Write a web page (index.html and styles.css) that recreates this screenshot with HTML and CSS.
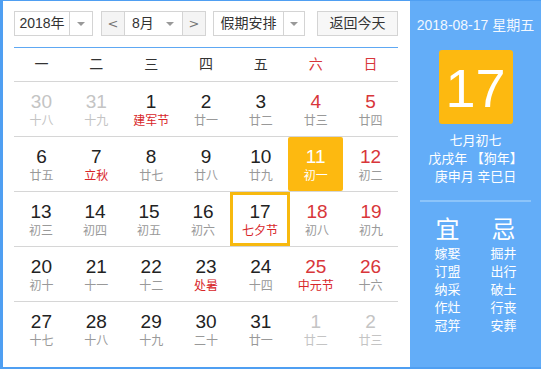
FILE: index.html
```html
<!DOCTYPE html>
<html>
<head>
    <meta charset="utf-8">
    <title>万年历</title>
    <link rel="stylesheet" href="styles.css">
</head>
<body>
<div class="calendar">
    <div class="main">
        <div class="toolbar">
            <div class="select year">
                <span class="sel-text">2018年</span>
                <span class="sel-arrow"><i class="tri"></i></span>
            </div>
            <div class="month-group">
                <span class="nav-btn">&lt;</span>
                <span class="month-text"><span>8月</span><i class="tri"></i></span>
                <span class="nav-btn">&gt;</span>
            </div>
            <div class="select holiday">
                <span class="sel-text">假期安排</span>
                <span class="sel-arrow"><i class="tri"></i></span>
            </div>
            <span class="today-btn">返回今天</span>
        </div>

        <div class="week">
            <span>一</span><span>二</span><span>三</span><span>四</span><span>五</span>
            <span class="weekend">六</span><span class="weekend">日</span>
        </div>

        <div class="row">
            <div class="cell other"><b>30</b><em>十八</em></div>
            <div class="cell other"><b>31</b><em>十九</em></div>
            <div class="cell"><b>1</b><em class="fest">建军节</em></div>
            <div class="cell"><b>2</b><em>廿一</em></div>
            <div class="cell"><b>3</b><em>廿二</em></div>
            <div class="cell weekend"><b>4</b><em>廿三</em></div>
            <div class="cell weekend"><b>5</b><em>廿四</em></div>
        </div>
        <div class="row">
            <div class="cell"><b>6</b><em>廿五</em></div>
            <div class="cell"><b>7</b><em class="fest">立秋</em></div>
            <div class="cell"><b>8</b><em>廿七</em></div>
            <div class="cell"><b>9</b><em>廿八</em></div>
            <div class="cell"><b>10</b><em>廿九</em></div>
            <div class="cell weekend hl"><b>11</b><em>初一</em></div>
            <div class="cell weekend"><b>12</b><em>初二</em></div>
        </div>
        <div class="row">
            <div class="cell"><b>13</b><em>初三</em></div>
            <div class="cell"><b>14</b><em>初四</em></div>
            <div class="cell"><b>15</b><em>初五</em></div>
            <div class="cell"><b>16</b><em>初六</em></div>
            <div class="cell cur"><b>17</b><em class="fest">七夕节</em></div>
            <div class="cell weekend"><b>18</b><em>初八</em></div>
            <div class="cell weekend"><b>19</b><em>初九</em></div>
        </div>
        <div class="row">
            <div class="cell"><b>20</b><em>初十</em></div>
            <div class="cell"><b>21</b><em>十一</em></div>
            <div class="cell"><b>22</b><em>十二</em></div>
            <div class="cell"><b>23</b><em class="fest">处暑</em></div>
            <div class="cell"><b>24</b><em>十四</em></div>
            <div class="cell weekend"><b>25</b><em class="fest">中元节</em></div>
            <div class="cell weekend"><b>26</b><em>十六</em></div>
        </div>
        <div class="row last">
            <div class="cell"><b>27</b><em>十七</em></div>
            <div class="cell"><b>28</b><em>十八</em></div>
            <div class="cell"><b>29</b><em>十九</em></div>
            <div class="cell"><b>30</b><em>二十</em></div>
            <div class="cell"><b>31</b><em>廿一</em></div>
            <div class="cell other"><b>1</b><em>廿二</em></div>
            <div class="cell other"><b>2</b><em>廿三</em></div>
        </div>
    </div>

    <div class="side">
        <div class="side-date">2018-08-17 星期五</div>
        <div class="big-day">17</div>
        <div class="lunar">
            <p>七月初七</p>
            <p>戊戌年 【狗年】</p>
            <p>庚申月 辛巳日</p>
        </div>
        <div class="split"></div>
        <div class="yiji">
            <div class="col">
                <h3>宜</h3>
                <p>嫁娶</p><p>订盟</p><p>纳采</p><p>作灶</p><p>冠笄</p>
            </div>
            <div class="col">
                <h3>忌</h3>
                <p>掘井</p><p>出行</p><p>破土</p><p>行丧</p><p>安葬</p>
            </div>
        </div>
    </div>
</div>
</body>
</html>
```

FILE: styles.css
```css
*{
    box-sizing: border-box;
}
body{
    margin: 0;
    font-family: "Liberation Sans", "Noto Sans CJK SC", sans-serif;
    color: #333;
}
.calendar{
    width: 541px;
    height: 369px;
    display: flex;
    border-left: 3px solid #4f9ff2;
    border-top: 1px solid #4f9ff2;
    border-bottom: 2px solid #4f9ff2;
    background-color: #fff;
}
.main{
    width: 407px;
    padding: 10px 12px 0 11px;
}
.side{
    flex: 1;
    background-color: #63adf8;
    color: #fff;
    text-align: center;
    padding-top: 16px;
}

/* 工具栏 */
.toolbar{
    display: flex;
    height: 25px;
    font-size: 14px;
    white-space: nowrap;
}
.select{
    display: flex;
    height: 25px;
    border: solid 1px #d4d4d4;
    background-color: #fff;
}
.sel-text{
    line-height: 23px;
    text-align: center;
}
.sel-arrow{
    display: flex;
    align-items: center;
    justify-content: center;
    border-left: solid 1px #d4d4d4;
}
.year{
    width: 79px;
}
.year .sel-text{
    width: 54px;
}
.year .sel-arrow{
    width: 23px;
}
.holiday{
    width: 92px;
    margin-left: 7px;
}
.holiday .sel-text{
    width: 69px;
}
.holiday .sel-arrow{
    width: 21px;
}
.tri{
    display: inline-block;
    width: 0;
    height: 0;
    border-left: 4px solid transparent;
    border-right: 4px solid transparent;
    border-top: 4px solid #999;
}
.month-group{
    display: flex;
    width: 105px;
    height: 25px;
    margin-left: 8px;
    border: solid 1px #d4d4d4;
}
.nav-btn{
    width: 22px;
    line-height: 23px;
    text-align: center;
    background-color: #f4f4f4;
    color: #777;
    font-family: "DejaVu Sans", sans-serif;
    font-size: 13px;
}
.month-text{
    flex: 1;
    display: flex;
    align-items: center;
    justify-content: space-between;
    padding: 0 8px 0 7px;
    line-height: 23px;
    border-left: solid 1px #d4d4d4;
    border-right: solid 1px #d4d4d4;
}
.today-btn{
    margin-left: auto;
    width: 81px;
    height: 25px;
    line-height: 23px;
    text-align: center;
    border: solid 1px #d4d4d4;
    background-color: #f7f7f7;
}

/* 日历表 */
.week{
    display: flex;
    margin-top: 11px;
    height: 35px;
    border-top: solid 1px #5ea8f3;
    border-bottom: solid 1px #d6d6d6;
}
.week span{
    flex: 1;
    line-height: 32px;
    text-align: center;
    font-size: 14px;
    color: #333;
}
.week .weekend{
    color: #d8363a;
}
.row{
    display: flex;
    height: 55px;
    border-bottom: solid 1px #d6d6d6;
}
.row.last{
    border-bottom: none;
}
.cell{
    flex: 1;
    height: 54px;
    padding-top: 10px;
    text-align: center;
}
.cell b{
    display: block;
    font-weight: normal;
    font-size: 19px;
    line-height: 20px;
    color: #222;
}
.cell em{
    display: block;
    font-style: normal;
    font-size: 12px;
    line-height: 18px;
    color: #999;
}
.cell.weekend b{
    color: #d8363a;
}
.cell em.fest{
    color: #d8262a;
}
.cell.other b,
.cell.other em{
    color: #c4c4c4;
}
.cell.hl{
    background-color: #fdb910;
    border-radius: 2px;
}
.cell.hl b,
.cell.hl em{
    color: #fff;
}
.cell.cur{
    border: solid 3px #f7b90f;
    padding-top: 7px;
}

/* 右侧 */
.side-date{
    font-size: 14px;
    line-height: 16px;
    color: #f2f8ff;
}
.big-day{
    width: 74px;
    height: 74px;
    margin: 17px auto 0;
    background-color: #fdb910;
    border-radius: 3px;
    font-size: 54px;
    line-height: 76px;
    color: #fff;
}
.lunar{
    margin-top: 8px;
    font-size: 13px;
}
.lunar p{
    margin: 0;
    line-height: 18px;
}
.split{
    height: 2px;
    margin: 14px 10px 0 10px;
    background-color: #8cc4fa;
}
.yiji{
    display: flex;
    justify-content: center;
    gap: 16px;
    margin-top: 13px;
}
.yiji .col{
    width: 40px;
}
.yiji h3{
    margin: 0;
    font-size: 24px;
    line-height: 30px;
    font-weight: normal;
}
.yiji p{
    margin: 0;
    font-size: 13px;
    line-height: 18px;
}
```
